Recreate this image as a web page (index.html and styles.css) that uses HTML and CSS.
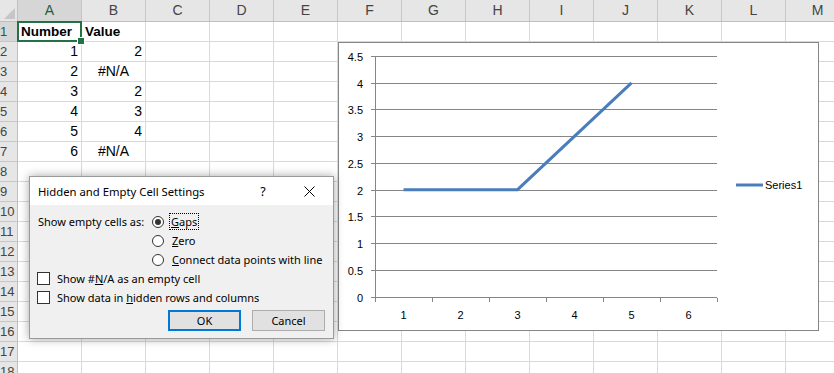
FILE: index.html
```html
<!DOCTYPE html>
<html>
    <head>
        <meta charset="utf-8">
        <link rel="stylesheet" href="styles.css">
    </head>

    <body>
        <div class="wrapper">
            <div class="sheet" id="sheet"></div>

            <div class="chart">
                <svg width="479" height="287" viewBox="0 0 479 287">
                    <g class="grid" id="gridLines"></g>
                    <g class="labels" id="labels"></g>
                    <polyline class="series" points="64.5,146.7 178.5,146.7 292.5,39.8"></polyline>
                    <line class="series" x1="397" y1="142" x2="424" y2="142"></line>
                    <text class="legend" x="426" y="146">Series1</text>
                </svg>
            </div>

            <div class="dialog">
                <div class="titlebar">
                    <span class="title">Hidden and Empty Cell Settings</span>
                    <span class="help">?</span>
                    <svg class="close" width="11" height="11" viewBox="0 0 11 11">
                        <path d="M0.5 0.5 L10.5 10.5 M10.5 0.5 L0.5 10.5"></path>
                    </svg>
                </div>
                <div class="body">
                    <div class="empty-row">
                        <div class="empty-label">Show empty cells as:</div>
                        <div class="options">
                            <div class="opt"><span class="radio checked"></span><span class="focus"><u>G</u>aps</span></div>
                            <div class="opt"><span class="radio"></span><span><u>Z</u>ero</span></div>
                            <div class="opt"><span class="radio"></span><span><u>C</u>onnect data points with line</span></div>
                        </div>
                    </div>
                    <div class="check"><span class="box"></span><span>Show #<u>N</u>/A as an empty cell</span></div>
                    <div class="check"><span class="box"></span><span>Show data in <u>h</u>idden rows and columns</span></div>
                    <div class="buttons">
                        <button class="btn default">OK</button>
                        <button class="btn">Cancel</button>
                    </div>
                </div>
            </div>
        </div>

        <script>
            var cols = "ABCDEFGHIJKLM".split("");
            var data = {
                1: [["Number", "bold"], ["Value", "bold"]],
                2: [["1", "num"], ["2", "num"]],
                3: [["2", "num"], ["#N/A", "err"]],
                4: [["3", "num"], ["2", "num"]],
                5: [["4", "num"], ["3", "num"]],
                6: [["5", "num"], ["4", "num"]],
                7: [["6", "num"], ["#N/A", "err"]]
            };

            function cell(cls, text) {
                return '<div class="' + cls + '">' + (text || "") + "</div>";
            }

            function renderSheet() {
                var r = cell("corner");
                for (var c = 0; c < cols.length; c++) {
                    r += cell("colhead" + (c == 0 ? " sel" : ""), cols[c]);
                }
                for (var row = 1; row <= 18; row++) {
                    r += cell("rowhead" + (row == 1 ? " sel" : ""), row);
                    for (var c = 0; c < cols.length; c++) {
                        var d = data[row] && data[row][c];
                        var cls = "cell";
                        if (d) cls += " " + d[1];
                        if (row == 1 && c == 0) cls += " active";
                        r += cell(cls, d ? d[0] : "");
                    }
                }
                document.getElementById("sheet").innerHTML = r;
            }

            function renderChart() {
                var g = document.getElementById("gridLines");
                var t = document.getElementById("labels");
                var left = 36, right = 378, top = 13, step = 26.74;
                var s = "";
                var l = "";
                for (var i = 0; i <= 9; i++) {
                    var y = Math.round(top + i * step) + 0.5;
                    s += '<line x1="' + (left - 4) + '" y1="' + y + '" x2="' + right + '" y2="' + y + '"/>';
                    var v = (4.5 - i * 0.5);
                    l += '<text x="24" y="' + (y + 4) + '" text-anchor="end">' + v + "</text>";
                }
                var bottom = Math.round(top + 9 * step) + 0.5;
                s += '<line x1="' + (left + 0.5) + '" y1="' + top + '" x2="' + (left + 0.5) + '" y2="' + bottom + '"/>';
                for (var k = 0; k <= 6; k++) {
                    var x = left + k * 57 + 0.5;
                    s += '<line x1="' + x + '" y1="' + bottom + '" x2="' + x + '" y2="' + (bottom + 4) + '"/>';
                    if (k < 6) {
                        l += '<text x="' + (left + k * 57 + 28.5) + '" y="276" text-anchor="middle">' + (k + 1) + "</text>";
                    }
                }
                g.innerHTML = s;
                t.innerHTML = l;
            }

            renderSheet();
            renderChart();
        </script>
    </body>
</html>
```

FILE: styles.css
```css
* {
    box-sizing: border-box;
}

body {
    margin: 0;
    padding: 0;
    background-color: #fff;
    overflow: hidden;
}

.wrapper {
    position: relative;
    width: 834px;
    height: 373px;
    overflow: hidden;
}

.sheet {
    display: grid;
    grid-template-columns: 18px repeat(13, 64px);
    grid-template-rows: 22px;
    grid-auto-rows: 20px;
    font-family: "Liberation Sans", Arial, sans-serif;
    font-size: 14px;
    color: #000;
}

.corner {
    background-color: #e6e6e6;
    border-right: 1px solid #bfbfbf;
    border-bottom: 1px solid #bfbfbf;
    position: relative;
}

.corner::after {
    content: "";
    position: absolute;
    right: 2px;
    bottom: 2px;
    border-left: 11px solid transparent;
    border-bottom: 11px solid #c6c6c6;
}

.colhead {
    background-color: #e6e6e6;
    border-right: 1px solid #c6c6c6;
    border-bottom: 1px solid #bfbfbf;
    color: #444;
    text-align: center;
    line-height: 21px;
}

.rowhead {
    background-color: #e6e6e6;
    border-right: 1px solid #bfbfbf;
    border-bottom: 1px solid #c6c6c6;
    color: #444;
    font-size: 13px;
    line-height: 19px;
    overflow: hidden;
    white-space: nowrap;
}

.colhead.sel, .rowhead.sel {
    background-color: #d6d6d6;
    color: #1e5e3a;
}

.cell {
    border-right: 1px solid #d9d9d9;
    border-bottom: 1px solid #d9d9d9;
    line-height: 19px;
    padding: 0 3px;
    white-space: nowrap;
}

.cell.bold {
    font-weight: bold;
    font-size: 13.5px;
}

.cell.num {
    text-align: right;
}

.cell.err {
    text-align: center;
}

.cell.active {
    position: relative;
}

.cell.active::before {
    content: "";
    position: absolute;
    left: -1px;
    top: -1px;
    right: -1px;
    bottom: -1px;
    border: 2px solid #217346;
}

.cell.active::after {
    content: "";
    position: absolute;
    right: -4px;
    bottom: -4px;
    width: 6px;
    height: 6px;
    background-color: #217346;
    border: 1px solid #fff;
}

.chart {
    position: absolute;
    left: 338px;
    top: 42px;
    width: 481px;
    height: 289px;
    border: 1px solid #868686;
    background-color: #fff;
}

.chart svg {
    display: block;
    font-family: "Liberation Sans", Arial, sans-serif;
    font-size: 11px;
}

.grid line {
    stroke: #868686;
    stroke-width: 1;
    shape-rendering: crispEdges;
}

.labels text, .legend {
    fill: #000;
}

.series {
    fill: none;
    stroke: #4a7ebb;
    stroke-width: 3;
}

.dialog {
    position: absolute;
    left: 29px;
    top: 176px;
    width: 305px;
    height: 163px;
    background-color: #f0f0f0;
    border: 1px solid #9a9a9a;
    box-shadow: 0 0 9px rgba(0, 0, 0, 0.35);
    font-family: "Noto Sans", sans-serif;
    font-size: 11px;
    color: #000;
}

.titlebar {
    height: 28px;
    background-color: #fff;
    display: flex;
    align-items: center;
    padding-left: 8px;
    font-size: 11.3px;
}

.title {
    flex: 1;
}

.help {
    width: 20px;
    text-align: center;
    margin-right: 31px;
    font-size: 12.5px;
}

.close {
    margin-right: 18px;
    fill: none;
    stroke: #000;
    stroke-width: 1;
}

.body {
    padding: 7px 7px 0 7px;
}

.empty-row {
    display: flex;
}

.empty-label {
    width: 115px;
    padding-left: 1px;
    line-height: 19px;
    white-space: nowrap;
}

.opt, .check {
    display: flex;
    align-items: center;
    height: 19px;
    white-space: nowrap;
}

.radio {
    width: 12px;
    height: 12px;
    border: 1px solid #333;
    border-radius: 50%;
    background-color: #fff;
    margin-right: 8px;
    position: relative;
}

.radio.checked::after {
    content: "";
    position: absolute;
    left: 2px;
    top: 2px;
    width: 6px;
    height: 6px;
    border-radius: 50%;
    background-color: #333;
}

.focus {
    outline: 1px dotted #000;
    padding: 0 1px;
    margin-left: -2px;
}

.box {
    width: 13px;
    height: 13px;
    border: 1px solid #333;
    background-color: #fff;
    margin-right: 7px;
}

.buttons {
    display: flex;
    justify-content: flex-end;
    gap: 11px;
    margin-top: 3px;
    padding-right: 1px;
}

.btn {
    width: 73px;
    height: 21px;
    background-color: #e1e1e1;
    border: 1px solid #adadad;
    font-family: "Noto Sans", sans-serif;
    font-size: 11px;
    padding: 0;
    color: #000;
}

.btn.default {
    border: 2px solid #0078d7;
}
```
